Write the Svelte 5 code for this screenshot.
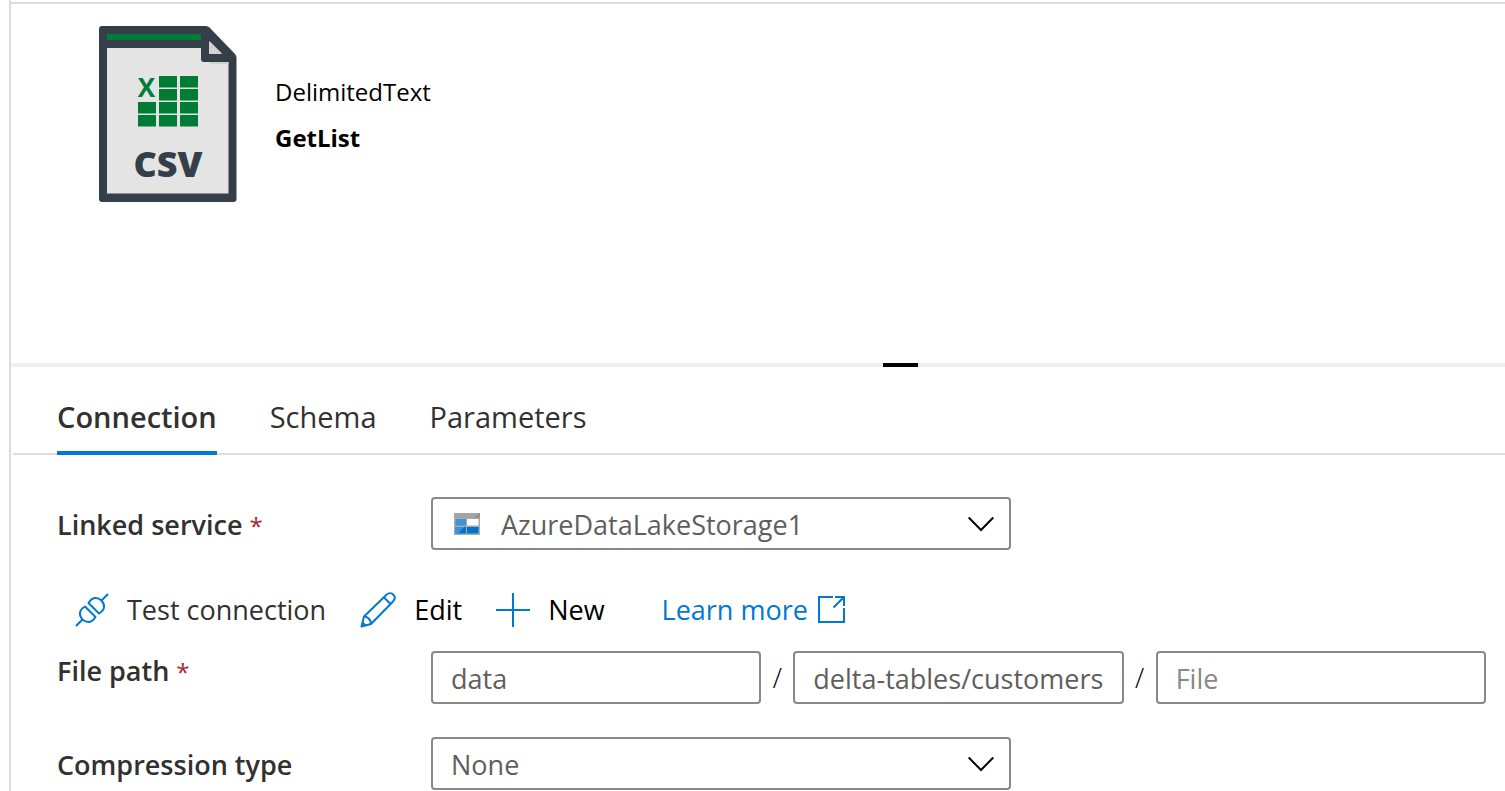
<script>
  const tabs = ['Connection', 'Schema', 'Parameters'];
  let active = $state('Connection');
  let container = $state('data');
  let directory = $state('delta-tables/customers');
  let file = $state('');
  const cells = [
    [159, 76], [180, 76],
    [159, 89], [180, 89],
    [138, 102], [159, 102], [180, 102],
    [138, 115], [159, 115], [180, 115]
  ];
</script>

{#snippet chevron()}
  <svg class="chevron" width="28" height="16" viewBox="0 0 28 16" aria-hidden="true">
    <path d="M1.7 1.5 14 14 26.3 1.5" fill="none" stroke="#000" stroke-width="2" />
  </svg>
{/snippet}

<main class="shell">
  <header class="summary">
    <svg class="file-icon" width="138" height="176" viewBox="99 26 138 176" aria-hidden="true">
      <path d="M102 26H206Q208 26 209.500 27.500L235 54Q236.500 55.500 236.500 58V199Q236.500 202 233.500 202H102Q99 202 99 199V29Q99 26 102 26Z" fill="#353f4a" />
      <path d="M107 34H201V40H107Z" fill="#007c36" />
      <path d="M107 48H201V59Q201 62 204 62H228.500V193.500H107Z" fill="#e4e4e4" />
      <path d="M209 62H228.500V64H211Z" fill="#d0d0d0" />
      <path d="M209 42Q209 40.500 210.500 42L221.500 53Q222.500 54 221 54H209Z" fill="#d2d2d4" />
      {#each cells as [x, y]}
        <rect {x} {y} width="18" height="11.500" fill="#007c36" />
      {/each}
      <text x="146.500" y="97" text-anchor="middle" font-size="26" font-weight="700" fill="#007c36">X</text>
      <text x="168" y="176.500" text-anchor="middle" font-size="36" font-weight="800" fill="#353f4a">CSV</text>
    </svg>
    <div class="names">
      <span>DelimitedText</span>
      <strong>GetList</strong>
    </div>
  </header>

  <div class="splitter"><span class="grip"></span></div>

  <div class="tabs" role="tablist">
    {#each tabs as tab}
      <button class="tab" class:active={active === tab} role="tab" aria-selected={active === tab} onclick={() => (active = tab)}>{tab}</button>
    {/each}
  </div>

  <form class="form">
    <div class="row">
      <label for="service">Linked service <span class="required">*</span></label>
      <div class="select with-icon">
        <svg class="service-icon" width="26" height="22" viewBox="0 0 26 22" aria-hidden="true">
          <path d="M0 0H26V22H0Z" fill="#a8aaac" />
          <path d="M0 0H26V5H0Z" fill="#949494" />
          <path d="M0 0H25L20 5H0Z" fill="#a5a5a5" />
          <path d="M1.500 6H12V12.500H1.500Z" fill="#3a94d9" />
          <path d="M13 6H24.500V12.500H13Z" fill="#fff" />
          <path d="M1.500 14H12V20.500H1.500Z" fill="#0072c9" />
          <path d="M1.500 14H10L4 20.500H1.500Z" fill="#3a94d9" />
          <path d="M13 14H24.500V20.500H13Z" fill="#0072c9" />
        </svg>
        <select id="service"><option>AzureDataLakeStorage1</option></select>
        {@render chevron()}
      </div>
    </div>

    <div class="actions">
      <button type="button" class="action test">
        <svg width="34" height="34" viewBox="0 0 34 34" aria-hidden="true">
          <g fill="none" stroke="#0078d4" stroke-width="2" stroke-linejoin="round">
            <path d="M1 33 7.500 26.500M26.500 7.500 33 1" />
            <path d="M10 13.500 20.500 24C16.500 30.500 11.500 30 7.500 26.500 3.500 22 4 17 10 13.500Z" />
            <path d="M13.500 10 24 20.500C30 17 30.500 12 26.500 7.500 22.500 4 17.500 3.500 13.500 10Z" />
          </g>
        </svg>
        Test connection
      </button>
      <button type="button" class="action edit">
        <svg width="36" height="36" viewBox="0 0 36 36" aria-hidden="true">
          <g fill="none" stroke="#0078d4" stroke-width="2" stroke-linejoin="round">
            <path d="M1.500 34.500 4 24.500 26.500 2.800C29 .6 31.800 1 33.200 2.500 35 4.300 35.300 7 33 9.500L11 32Z" />
            <path d="M24 5.500 30.500 12M4 24.500C8 24.500 11 28 11 32M2.500 30.500 5.500 33.500" />
          </g>
        </svg>
        Edit
      </button>
      <button type="button" class="action new">
        <svg width="34" height="34" viewBox="0 0 34 34" aria-hidden="true">
          <path d="M17 0V34M0 17H34" stroke="#0078d4" stroke-width="2" />
        </svg>
        New
      </button>
      <a class="more" href="#learn">
        Learn more
        <svg width="27" height="27" viewBox="0 0 27 27" aria-hidden="true">
          <path d="M15 1H1V26H26V12M17 1H26V10M26 1 15.500 11.500" fill="none" stroke="#0078d4" stroke-width="2" />
        </svg>
      </a>
    </div>

    <div class="row path-row">
      <label for="container">File path <span class="required">*</span></label>
      <div class="path">
        <input id="container" type="text" bind:value={container} />
        <span>/</span>
        <input type="text" aria-label="Directory" bind:value={directory} />
        <span>/</span>
        <input type="text" aria-label="File" placeholder="File" bind:value={file} />
      </div>
    </div>

    <div class="row">
      <label for="compression">Compression type</label>
      <div class="select">
        <select id="compression"><option>None</option></select>
        {@render chevron()}
      </div>
    </div>
  </form>
</main>

<style>
  :global(body) {
    margin: 0;
    background: #fff;
    overflow: hidden;
  }

  .shell,
  .shell button,
  .shell input,
  .shell select {
    font-family: 'Open Sans', 'Noto Sans', sans-serif;
    font-size: 27px;
    line-height: 36px;
    box-sizing: border-box;
  }

  .shell {
    min-height: 100vh;
    margin-left: 9px;
    border-left: 2px solid #ddd;
    padding-top: 2px;
    color: #323130;
  }

  .summary {
    display: flex;
    gap: 38px;
    min-height: 361px;
    padding: 22px 88px;
    box-sizing: border-box;
    border-top: 2px solid #ddd;
    color: #000;
  }

  .file-icon {
    flex: none;
  }

  .names {
    display: flex;
    flex-direction: column;
    gap: 10px;
    padding-top: 48px;
    font-size: 24px;
  }

  .splitter {
    display: flex;
    justify-content: center;
    height: 4px;
    padding-left: 285px;
    background: #eee;
  }

  .grip {
    width: 35px;
    background: #000;
  }

  .tabs {
    display: flex;
    gap: 53px;
    margin-left: 2px;
    padding: 0 44px;
    border-bottom: 2px solid #ddd;
  }

  .shell .tab {
    height: 88px;
    margin-bottom: -2px;
    padding: 16px 0 0;
    border: 0;
    border-bottom: 4px solid transparent;
    background: none;
    color: #323130;
    font-size: 29px;
  }

  .shell .tab.active {
    border-color: #0078d4;
    font-weight: 600;
  }

  .form {
    padding: 42px 19px 0 46px;
  }

  .row {
    display: grid;
    grid-template-columns: 374px 1fr;
    align-items: center;
  }

  label {
    font-weight: 600;
    padding-top: 2px;
  }

  .required {
    color: #a4262c;
    font-size: 24px;
    font-weight: 400;
    line-height: 24px;
  }

  .select {
    display: grid;
    grid-template-columns: 1fr;
    align-items: center;
    width: 55%;
  }

  .select > * {
    grid-area: 1 / 1;
  }

  .shell select,
  .shell input {
    width: 100%;
    min-width: 0;
    height: 53px;
    margin: 0;
    padding: 2px 18px 0;
    border: 2px solid #8a8886;
    border-radius: 4px;
    background: #fff;
    color: #605e5c;
    appearance: none;
  }

  .shell .with-icon select {
    padding-left: 68px;
  }

  .service-icon,
  .chevron {
    z-index: 1;
    pointer-events: none;
  }

  .service-icon {
    margin-left: 23px;
  }

  .chevron {
    justify-self: end;
    margin-right: 16px;
  }

  input::placeholder {
    color: #8a8886;
    opacity: 1;
  }

  .actions {
    display: flex;
    align-items: center;
    height: 101px;
    padding: 18px 0 0 18px;
    box-sizing: border-box;
  }

  .action,
  .more {
    display: flex;
    align-items: center;
    gap: 18px;
    padding: 0;
    border: 0;
    background: none;
    color: #000;
    white-space: nowrap;
  }

  .test {
    color: #323130;
  }

  .edit,
  .new {
    margin-left: 34px;
  }

  .more {
    gap: 10px;
    margin-left: 57px;
    color: #0078d4;
    text-decoration: none;
  }

  .path-row {
    margin-bottom: 33px;
  }

  .path-row label {
    align-self: start;
  }

  .path {
    display: flex;
    align-items: center;
  }

  .path input {
    flex: 1;
  }

  .path span {
    flex: none;
    width: 32px;
    text-align: center;
    color: #000;
    font-weight: 300;
  }
</style>
